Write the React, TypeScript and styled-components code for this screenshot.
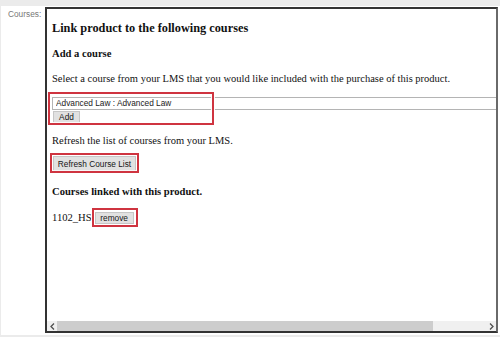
import React from 'react';
import styled, { createGlobalStyle } from 'styled-components';

const GlobalStyle = createGlobalStyle`
  html, body {
    margin: 0;
    padding: 0;
    background: #ebebeb;
  }
  * {
    box-sizing: border-box;
  }
`;

const App = () => {
  return (
    <>
      <GlobalStyle />
      <Page>
        <Panel>
          <FieldLabel>Courses:</FieldLabel>
          <FrameBox>
            <Content>
              <Title>Link product to the following courses</Title>
              <SubTitle $top={11}>Add a course</SubTitle>
              <Text $top={11}>
                Select a course from your LMS that you would like included with the purchase of this product.
              </Text>
              <AddGroup>
                <CourseSelect defaultValue="advanced-law">
                  <option value="advanced-law">Advanced Law : Advanced Law</option>
                </CourseSelect>
                <Button $w={27} $h={12} $left={1} $top={1}>
                  Add
                </Button>
              </AddGroup>
              <Text $top={9}>Refresh the list of courses from your LMS.</Text>
              <Highlight $pad="3px 3px 2px 3px" $top={5} $left={-2}>
                <Button $w={83} $h={15}>Refresh Course List</Button>
              </Highlight>
              <SubTitle $top={12}>Courses linked with this product.</SubTitle>
              <LinkedRow>
                <CourseCode>1102_HS</CourseCode>
                <Highlight $pad="4px 4px 3px 3px">
                  <Button $w={39} $h={12}>remove</Button>
                </Highlight>
              </LinkedRow>
            </Content>
            <HScrollbar>
              <ScrollArrow>
                <svg width="5" height="7" viewBox="0 0 5 7">
                  <path d="M4 0.5 L1 3.5 L4 6.5" fill="none" stroke="#505050" strokeWidth="1.3" />
                </svg>
              </ScrollArrow>
              <ScrollTrack>
                <ScrollThumb style={{ width: `${(376 / 429) * 100}%` }} />
              </ScrollTrack>
              <ScrollArrow>
                <svg width="5" height="7" viewBox="0 0 5 7">
                  <path d="M1 0.5 L4 3.5 L1 6.5" fill="none" stroke="#505050" strokeWidth="1.3" />
                </svg>
              </ScrollArrow>
            </HScrollbar>
          </FrameBox>
        </Panel>
      </Page>
    </>
  );
};

export default App;

const Page = styled.div`
  width: 500px;
  height: 337px;
  padding: 6px 0 2px 1px;
  background: #ebebeb;
  overflow: hidden;
`;

const Panel = styled.div`
  display: flex;
  align-items: flex-start;
  height: 329px;
  padding-top: 1px;
  background: #ffffff;
`;

const FieldLabel = styled.div`
  width: 44px;
  padding: 2px 0 0 7px;
  font-family: 'Liberation Sans', Arial, sans-serif;
  font-size: 8.3px;
  line-height: 10px;
  color: #777777;
`;

const FrameBox = styled.div`
  display: flex;
  flex-direction: column;
  width: 453px;
  height: 326px;
  border: 2px solid #333333;
  border-right-color: #6a6a6a;
  background: #ffffff;
`;

const Content = styled.div`
  flex: 1;
  min-height: 0;
  padding: 11px 0 0 5px;
  overflow: hidden;
  font-family: 'Liberation Serif', 'Times New Roman', serif;
  color: #111111;
`;

const Title = styled.h3`
  margin: 0;
  font-size: 12.3px;
  line-height: 16px;
  font-weight: 700;
  white-space: nowrap;
`;

const SubTitle = styled.h4<{ $top: number }>`
  margin: ${({ $top }) => $top}px 0 0 0;
  font-size: 10.6px;
  line-height: 14px;
  font-weight: 700;
  white-space: nowrap;
`;

const Text = styled.p<{ $top: number }>`
  margin: ${({ $top }) => $top}px 0 0 0;
  font-size: 10.5px;
  line-height: 14px;
  white-space: nowrap;
`;

const Highlight = styled.div<{ $pad: string; $top?: number; $left?: number }>`
  position: relative;
  display: inline-flex;
  padding: ${({ $pad }) => $pad};
  margin: ${({ $top = 0 }) => $top}px 0 0 ${({ $left = 0 }) => $left}px;

  &::after {
    content: '';
    position: absolute;
    inset: 0;
    border: 2px solid #cf3440;
    box-shadow: 0 0 0 1px rgba(255, 255, 255, 0.85), inset 0 0 0 1px rgba(255, 255, 255, 0.85);
    pointer-events: none;
    z-index: 1;
  }
`;

const AddGroup = styled.div`
  position: relative;
  display: flex;
  flex-direction: column;
  align-items: flex-start;
  width: 166px;
  height: 33px;
  margin: 6px 0 0 -4px;
  padding: 5px 0 0 4px;

  &::after {
    content: '';
    position: absolute;
    inset: 0;
    border: 2px solid #cf3440;
    box-shadow: 0 0 0 1px rgba(255, 255, 255, 0.9), inset 0 0 0 1px rgba(255, 255, 255, 0.9);
    pointer-events: none;
    z-index: 1;
  }
`;

const CourseSelect = styled.select`
  appearance: none;
  flex-shrink: 0;
  width: 470px;
  height: 13px;
  margin: 0;
  padding: 0 0 0 3px;
  border: 1px solid #b4b4b4;
  border-radius: 0;
  background: #ffffff;
  font-family: 'Liberation Sans', Arial, sans-serif;
  font-size: 8.3px;
  line-height: 11px;
  color: #222222;
  outline: none;
`;

const Button = styled.button<{ $w: number; $h: number; $left?: number; $top?: number }>`
  display: inline-flex;
  align-items: center;
  justify-content: center;
  width: ${({ $w }) => $w}px;
  height: ${({ $h }) => $h}px;
  margin: ${({ $top = 0 }) => $top}px 0 0 ${({ $left = 0 }) => $left}px;
  padding: 0;
  border: 1px solid #c6c6c6;
  border-radius: 0;
  background: #e1e1e1;
  font-family: 'Liberation Sans', Arial, sans-serif;
  font-size: 8.3px;
  line-height: 10px;
  color: #151515;
  white-space: nowrap;
`;

const LinkedRow = styled.div`
  display: flex;
  align-items: center;
  margin-top: 9px;
`;

const CourseCode = styled.span`
  font-size: 10.6px;
  line-height: 14px;
`;

const HScrollbar = styled.div`
  display: flex;
  flex-shrink: 0;
  height: 10px;
  background: #f0f0f0;
`;

const ScrollArrow = styled.div`
  display: flex;
  align-items: center;
  justify-content: center;
  width: 10px;
  height: 10px;
  background: #f0f0f0;
`;

const ScrollTrack = styled.div`
  flex: 1;
  height: 10px;
  background: #f0f0f0;
`;

const ScrollThumb = styled.div`
  height: 100%;
  background: #cdcdcd;
`;
